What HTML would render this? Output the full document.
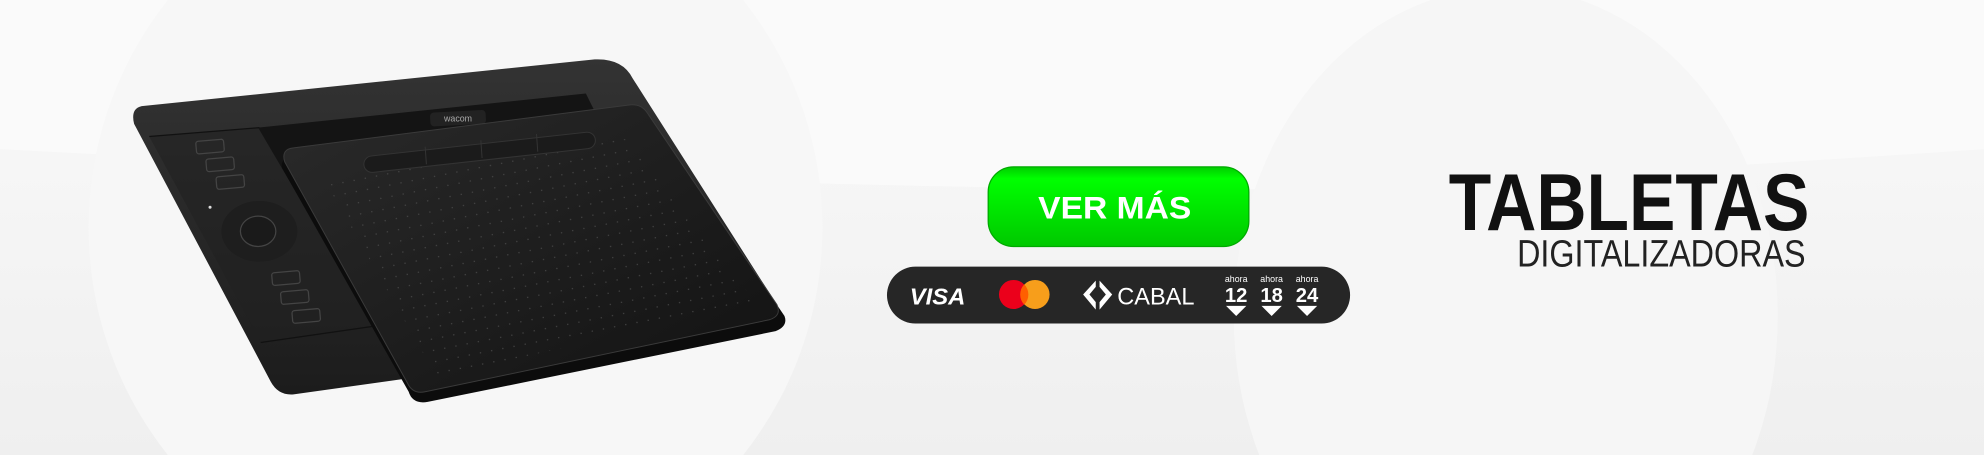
<!DOCTYPE html>
<html><head><meta charset="utf-8"><style>
html,body{margin:0;padding:0;width:1984px;height:455px;overflow:hidden;background:#f1f1f1}
svg{display:block;position:absolute;left:0;top:0}
</style></head><body>
<svg width="1984" height="455" viewBox="0 0 1568 360" preserveAspectRatio="none" xmlns="http://www.w3.org/2000/svg">
<defs>
<linearGradient id="bg" x1="0" y1="0" x2="0" y2="1">
<stop offset="0" stop-color="#fbfbfb"/><stop offset="0.35" stop-color="#f6f6f6"/><stop offset="1" stop-color="#efefef"/>
</linearGradient>
<linearGradient id="gr" x1="0" y1="0" x2="0" y2="1">
<stop offset="0" stop-color="#0c0"/><stop offset="0.15" stop-color="#00ff00"/><stop offset="1" stop-color="#00c800"/>
</linearGradient>
<linearGradient id="pad" x1="0" y1="0" x2="1" y2="1">
<stop offset="0" stop-color="#2a2a2a"/><stop offset="1" stop-color="#121212"/>
</linearGradient>
<linearGradient id="back" x1="0" y1="0" x2="0" y2="1">
<stop offset="0" stop-color="#333"/><stop offset="1" stop-color="#1c1c1c"/>
</linearGradient>
<pattern id="dots" width="9" height="9" patternUnits="userSpaceOnUse" patternTransform="rotate(-11)">
<circle cx="4.5" cy="4.5" r="0.5" fill="#4e4e4e"/>
</pattern>
<clipPath id="padclip"><polygon points="255,140 495,110 598,240 345,298"/></clipPath>
</defs>
<rect width="1568" height="360" fill="url(#bg)"/>
<path d="M0,0 H1568 V118 Q1250,140 980,150 Q600,150 0,118 Z" fill="#fafafa"/>
<circle cx="360" cy="180" r="290" fill="#f7f7f7"/>
<ellipse cx="1190" cy="250" rx="215" ry="260" fill="#f6f6f6"/>

<!-- back plate -->
<path d="M112,84 L470,47 Q492,46 500,62 L612,238 L318,300 L232,312 Q220,313 214,302 L106,98 Q103,86 112,84 Z" fill="url(#back)"/>
<path d="M118,108 L204,101 L296,258 L207,272 Z" fill="#222" opacity="0.6"/>
<path d="M204,101 L463,74 L470,88 L296,258 Z" fill="#141414"/>
<line x1="118" y1="108" x2="205" y2="101" stroke="#111" stroke-width="1"/>
<line x1="206" y1="271" x2="296" y2="258" stroke="#111" stroke-width="1"/>
<g fill="none" stroke="#444" stroke-width="1">
<rect x="155" y="111" width="22" height="10" rx="2" transform="rotate(-5 166 116)"/>
<rect x="163" y="125" width="22" height="10" rx="2" transform="rotate(-5 174 130)"/>
<rect x="171" y="139" width="22" height="10" rx="2" transform="rotate(-5 182 144)"/>
<rect x="215" y="215" width="22" height="10" rx="2" transform="rotate(-5 226 220)"/>
<rect x="222" y="230" width="22" height="10" rx="2" transform="rotate(-5 233 235)"/>
<rect x="231" y="245" width="22" height="10" rx="2" transform="rotate(-5 242 250)"/>
</g>
<ellipse cx="205" cy="183" rx="30" ry="24" fill="#1e1e1e"/>
<ellipse cx="204" cy="183" rx="14" ry="12" fill="#1a1a1a" stroke="#444" stroke-width="1"/>
<circle cx="166" cy="164" r="1.2" fill="#ddd"/>
<rect x="340" y="88" width="44" height="11" rx="3" fill="#222" transform="rotate(-3 362 94)"/>
<text x="362" y="96" font-family="Liberation Sans, sans-serif" font-size="7" fill="#aaa" text-anchor="middle">wacom</text>

<!-- front pad -->
<path d="M232,124 L500,88 Q510,86 515,95 L620,250 Q623,258 613,262 L338,318 Q326,320 323,310 L223,133 Q221,125 232,124 Z" fill="#0c0c0c"/>
<path d="M232,117 L498,83 Q507,82 512,90 L614,241 Q618,250 608,253 L336,310 Q326,312 322,303 L225,128 Q222,118 232,117 Z" fill="url(#pad)" stroke="#3a3a3a" stroke-width="0.8"/>
<rect x="240" y="95" width="370" height="215" fill="url(#dots)" clip-path="url(#padclip)"/>
<rect x="287" y="114" width="184" height="13" rx="6.5" fill="#1b1b1b" stroke="#333" stroke-width="0.8" transform="rotate(-6.3 379 120)"/>
<g stroke="#333" stroke-width="0.8">
<line x1="336" y1="116" x2="337" y2="130"/><line x1="380" y1="111" x2="381" y2="125"/><line x1="424" y1="106" x2="425" y2="120"/>
</g>

<!-- button -->
<rect x="781" y="132" width="206" height="63" rx="20" fill="url(#gr)" stroke="#0a0" stroke-width="1"/>
<text x="881" y="173" font-family="Liberation Sans, sans-serif" font-weight="bold" font-size="25" fill="#fff" text-anchor="middle" textLength="121" lengthAdjust="spacingAndGlyphs">VER MÁS</text>

<!-- payment pill -->
<rect x="701" y="211" width="366" height="45" rx="22.5" fill="#262626"/>
<text x="719" y="241" font-family="Liberation Sans, sans-serif" font-weight="bold" font-style="italic" font-size="18" fill="#fff" textLength="44" lengthAdjust="spacingAndGlyphs">VISA</text>
<circle cx="801" cy="233" r="11.5" fill="#eb001b"/>
<circle cx="818" cy="233" r="11.5" fill="#f79e1b"/>
<path d="M809.5,225 A11.5,11.5 0 0 1 809.5,241 A11.5,11.5 0 0 1 809.5,225Z" fill="#ff5f00"/>
<path d="M866,222 L856,233 L866,245 L866,239 L861,233 L866,227 Z M869,222 L879,233 L869,245 L869,239 L874,233 L869,227 Z" fill="#fff"/>
<text x="883" y="241" font-family="Liberation Sans, sans-serif" font-size="19" fill="#fff" textLength="61" lengthAdjust="spacingAndGlyphs">CABAL</text>
<g font-family="Liberation Sans, sans-serif" fill="#fff" text-anchor="middle">
<text x="977" y="223" font-size="7">ahora</text>
<text x="1005" y="223" font-size="7">ahora</text>
<text x="1033" y="223" font-size="7">ahora</text>
<text x="977" y="239" font-size="16" font-weight="bold">12</text>
<text x="1005" y="239" font-size="16" font-weight="bold">18</text>
<text x="1033" y="239" font-size="16" font-weight="bold">24</text>
</g>
<path d="M969,242 H985 L977,250 Z M997,242 H1013 L1005,250 Z M1025,242 H1041 L1033,250 Z" fill="#fff"/>

<!-- title -->
<text x="1145" y="182" font-family="Liberation Sans, sans-serif" font-weight="bold" font-size="64" fill="#111" textLength="285" lengthAdjust="spacingAndGlyphs">TABLETAS</text>
<text x="1199" y="211" font-family="Liberation Sans, sans-serif" font-size="30" fill="#222" textLength="228" lengthAdjust="spacingAndGlyphs">DIGITALIZADORAS</text>
</svg>
</body></html>
